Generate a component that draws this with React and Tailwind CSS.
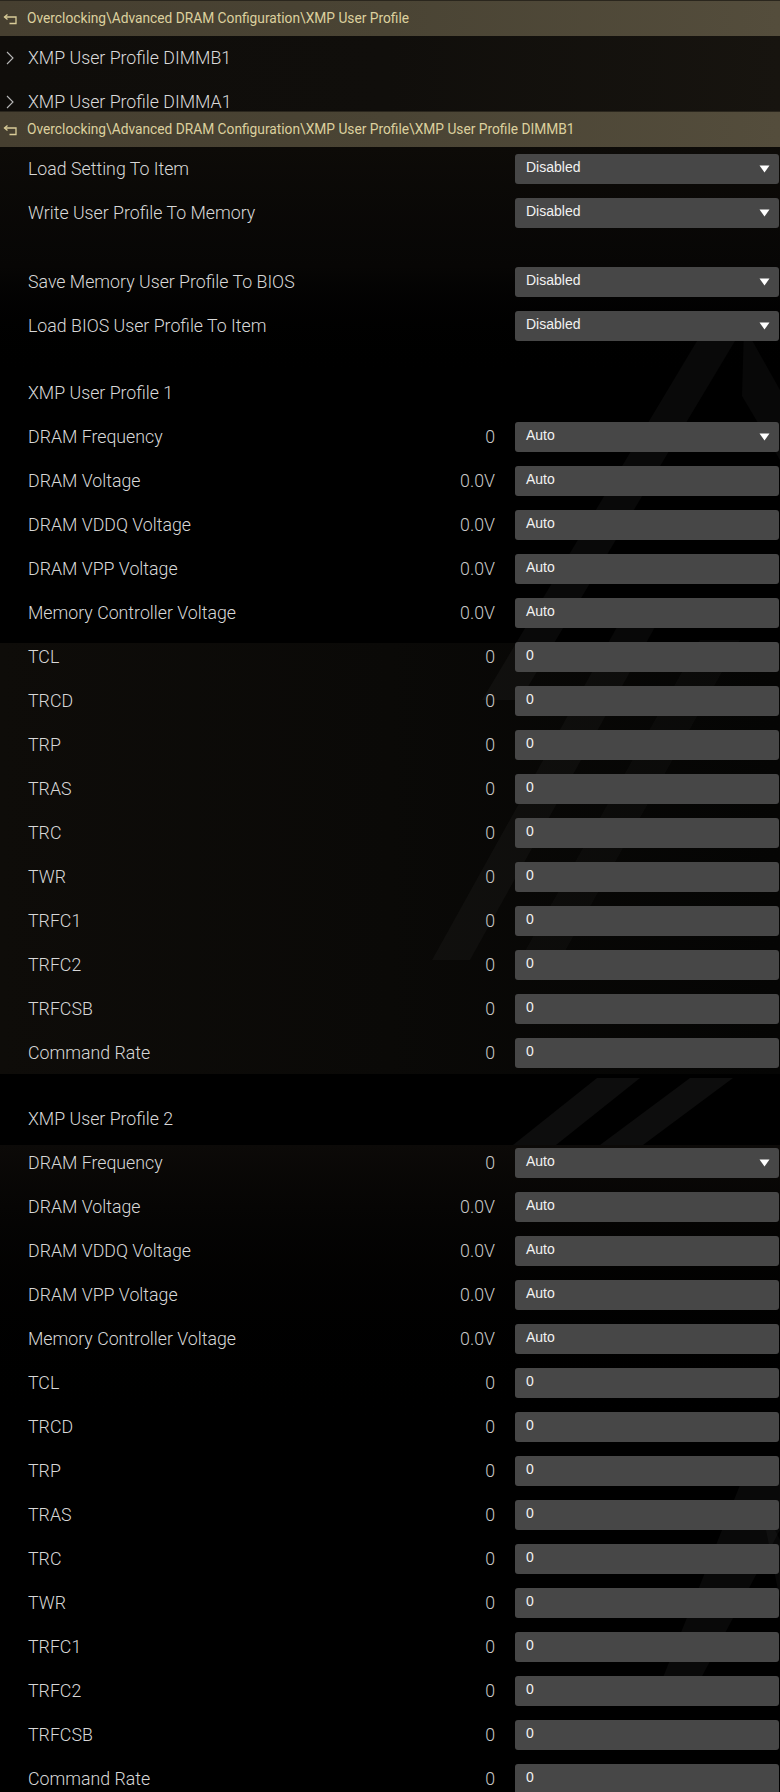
import React from 'react';

const TIMINGS = ['TCL', 'TRCD', 'TRP', 'TRAS', 'TRC', 'TWR', 'TRFC1', 'TRFC2', 'TRFCSB', 'Command Rate'];
const VOLTAGES = ['DRAM Voltage', 'DRAM VDDQ Voltage', 'DRAM VPP Voltage', 'Memory Controller Voltage'];

function ReturnIcon() {
  return (
    <svg width="15" height="12" viewBox="0 0 15 12" fill="none" stroke="#d9cc98" strokeWidth="1.3" className="shrink-0">
      <path d="M4.5 1.5 L1.5 4 L4.5 6.5" />
      <path d="M1.8 4 H13 V10.5 H6.5" />
    </svg>
  );
}

function Breadcrumb({ path }) {
  return (
    <div className="h-[36px] flex items-center gap-[9px] pl-[3px] bg-gradient-to-r from-[#463f30] via-[#4a4434] to-[#544d3c] border-t border-[#2a261d]">
      <ReturnIcon />
      <span className="text-[13.75px] text-[#dcd09e] whitespace-nowrap">{path}</span>
    </div>
  );
}

function SubMenu({ label }) {
  return (
    <div className="h-[44px] shrink-0 flex items-center">
      <svg width="28" height="16" viewBox="0 0 28 16" fill="none" stroke="#b8b8b8" strokeWidth="1.1" className="shrink-0">
        <path d="M7 2 L13 8 L7 14" />
      </svg>
      <span className="text-[17.75px] font-light text-[#dadada]">{label}</span>
    </div>
  );
}

function Arrow() {
  return (
    <svg width="11" height="8" viewBox="0 0 11 8" className="shrink-0 mt-[3px]">
      <path d="M0.5 0.5 H10.5 L5.5 7.5 Z" fill="#ffffff" />
    </svg>
  );
}

function Row({ label, value, box, dropdown }) {
  return (
    <div className="h-[44px] flex items-center pl-[28px]">
      <span className="flex-1 text-[17.75px] font-light text-[#d8d8d8] whitespace-nowrap">{label}</span>
      {value !== undefined && <span className="text-[17.75px] font-light text-[#c8c8c8]">{value}</span>}
      {box !== undefined && (
        <div className="ml-[20px] mr-[1px] w-[264px] h-[30px] rounded-[3px] bg-[#474747] flex items-center justify-between pl-[11px] pr-[9px] pb-[3px] font-['Liberation_Sans',Arial,sans-serif]">
          <span className="text-[14px] text-[#f2f2f2]">{box}</span>
          {dropdown && <Arrow />}
        </div>
      )}
    </div>
  );
}

function Header({ label }) {
  return (
    <div className="h-[44px] flex items-center pl-[28px]">
      <span className="text-[17.75px] font-light text-[#d8d8d8]">{label}</span>
    </div>
  );
}

function ProfileTop() {
  return (
    <>
      <Row label="DRAM Frequency" value="0" box="Auto" dropdown />
      {VOLTAGES.map((v) => (
        <Row key={v} label={v} value="0.0V" box="Auto" />
      ))}
    </>
  );
}

function Timings() {
  return TIMINGS.map((t) => <Row key={t} label={t} value="0" box="0" />);
}

function Stripes() {
  return (
    <svg className="absolute inset-0 pointer-events-none" width="780" height="1792" viewBox="0 0 780 1792">
      <g fill="#ffffff">
        <polygon points="706,326 744,326 520,700 482,700" opacity="0.035" />
        <polygon points="744,326 780,390 780,460 742,396" opacity="0.03" />
        <polygon points="632,600 670,600 470,960 432,960" opacity="0.03" />
        <polygon points="700,640 740,640 560,960 520,960" opacity="0.025" />
        <polygon points="597,1078 640,1078 556,1145 513,1145" opacity="0.05" />
        <polygon points="690,1078 733,1078 643,1145 600,1145" opacity="0.05" />
        <polygon points="746,1470 780,1470 780,1530 700,1680 662,1680" opacity="0.035" />
        <polygon points="760,1500 780,1540 780,1600" opacity="0.03" />
        <polygon points="700,0 740,0 780,60 780,120" opacity="0.05" />
      </g>
    </svg>
  );
}

export default function App() {
  return (
    <div className="relative w-[780px] h-[1792px] overflow-hidden bg-black font-['Roboto','Open_Sans',sans-serif]">
      <div className="absolute left-0 right-0 top-[147px] h-[240px] bg-gradient-to-b from-[#0d0b08] via-[#070605] to-black" />
      <div className="absolute left-0 right-0 top-[643px] h-[431px] bg-gradient-to-r from-[#0e0c09] via-[#0a0907] to-[#050504]" />
      <div className="absolute left-0 right-0 top-[1145px] h-[300px] bg-gradient-to-b from-[#0c0a08] to-black" />
      <Stripes />

      <div className="relative flex flex-col">
        <Breadcrumb path="Overclocking\Advanced DRAM Configuration\XMP User Profile" />
        <div className="h-[75px] overflow-hidden flex flex-col bg-gradient-to-r from-[#0f0d0a] via-[#100e0b] to-[#17140f]">
          <SubMenu label="XMP User Profile DIMMB1" />
          <SubMenu label="XMP User Profile DIMMA1" />
        </div>
        <Breadcrumb path="Overclocking\Advanced DRAM Configuration\XMP User Profile\XMP User Profile DIMMB1" />

        <Row label="Load Setting To Item" box="Disabled" dropdown />
        <Row label="Write User Profile To Memory" box="Disabled" dropdown />
        <div className="h-[25px]" />
        <Row label="Save Memory User Profile To BIOS" box="Disabled" dropdown />
        <Row label="Load BIOS User Profile To Item" box="Disabled" dropdown />
        <div className="h-[23px]" />

        <Header label="XMP User Profile 1" />
        <ProfileTop />
        <Timings />
        <div className="h-[22px]" />

        <Header label="XMP User Profile 2" />
        <ProfileTop />
        <Timings />
      </div>
    </div>
  );
}
